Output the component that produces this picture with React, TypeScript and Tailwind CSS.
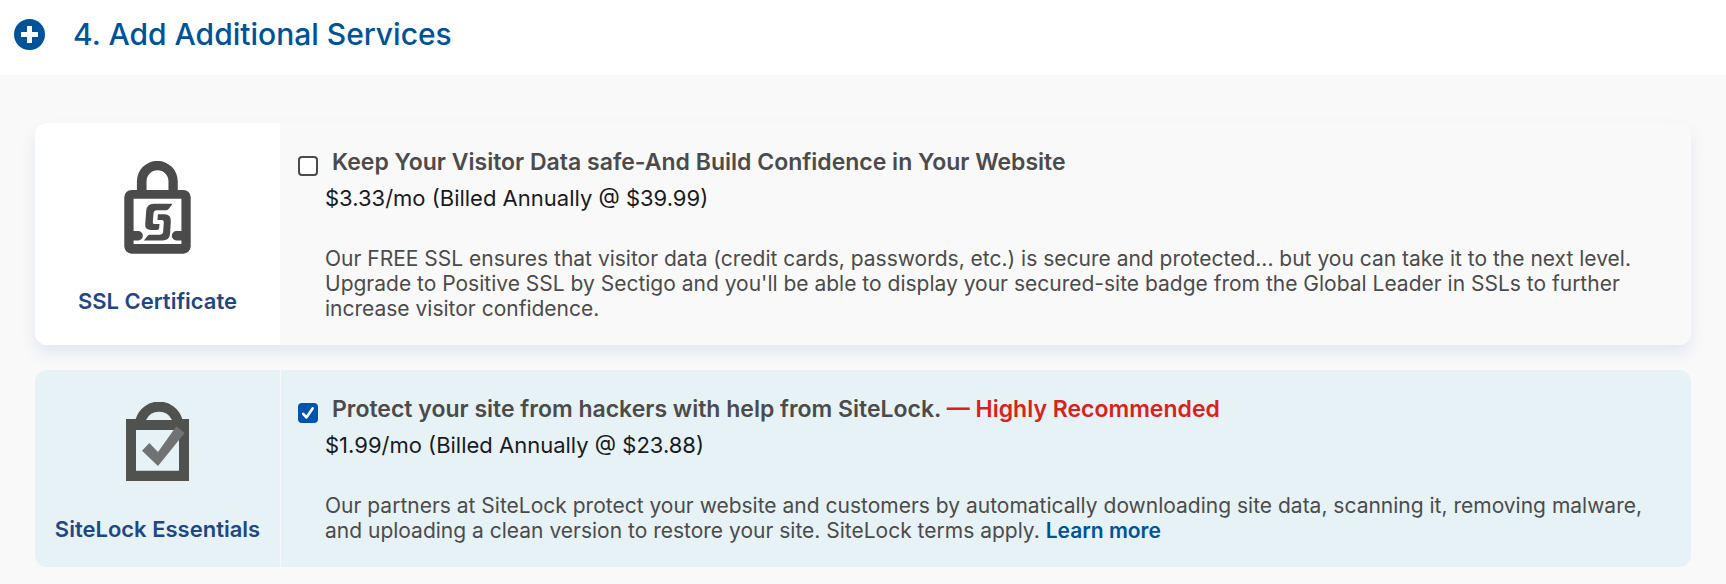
import React, { useId, useState } from 'react';

interface Service {
  name: string;
  icon: React.ReactNode;
  title: string;
  badge?: string;
  price: string;
  description: string;
  link?: string;
  selected: boolean;
}

const SslIcon: React.FC = () => (
  <svg viewBox="43 32 200 280" className="w-[67px] h-[93px]" fill="#4b4b4b" aria-hidden="true">
    <path d="M81 126V93a61.5 61.5 0 0 1 123 0v33h-28V93a33 33 0 0 0-66 0v33Z" />
    <path
      fillRule="evenodd"
      d="M65 119H221a22 22 0 0 1 22 22V289a22 22 0 0 1-22 22H65a22 22 0 0 1-22-22V141a22 22 0 0 1 22-22ZM71 146V282H215V146Z"
    />
    <path d="M60 243H85a14 14 0 0 1 0 28H60ZM226 243H200a14 14 0 0 0 0 28H226Z" />
    <path d="M186 161H132Q111 161 109 182L106 222Q105 240 123 240H142Q147 240 148 233L149 222H135Q128 222 129 214L131 190Q132 180 141 180H170Q174 180 177 176L187 163Z" />
    <path d="M144 192H164Q184 192 183 213L181 250Q179 271 158 271H102L114 256Q116 254 120 254H149Q159 254 160 244L162 217Q162 210 156 210H143Z" />
  </svg>
);

const SiteLockIcon: React.FC = () => (
  <svg viewBox="48 36 189 237" className="w-[63px] h-[79px]" aria-hidden="true">
    <path
      fill="#505250"
      fillRule="evenodd"
      d="M48 87H77A73 73 0 0 1 217 87H237V273H48ZM108 90H186A43 43 0 0 0 108 90ZM78 120V242H207V120Z"
    />
    <path fill="#717274" d="M96 182L118 159L144 186L199 109L224 129L144 228Z" />
  </svg>
);

const services: Service[] = [
  {
    name: 'SSL Certificate',
    icon: <SslIcon />,
    title: 'Keep Your Visitor Data safe-And Build Confidence in Your Website',
    price: '$3.33/mo (Billed Annually @ $39.99)',
    description:
      "Our FREE SSL ensures that visitor data (credit cards, passwords, etc.) is secure and protected... but you can take it to the next level. Upgrade to Positive SSL by Sectigo and you'll be able to display your secured-site badge from the Global Leader in SSLs to further increase visitor confidence.",
    selected: false,
  },
  {
    name: 'SiteLock Essentials',
    icon: <SiteLockIcon />,
    title: 'Protect your site from hackers with help from SiteLock.',
    badge: '— Highly Recommended',
    price: '$1.99/mo (Billed Annually @ $23.88)',
    description:
      'Our partners at SiteLock protect your website and customers by automatically downloading site data, scanning it, removing malware, and uploading a clean version to restore your site. SiteLock terms apply.',
    link: 'Learn more',
    selected: true,
  },
];

const ServiceCard: React.FC<{ service: Service }> = ({ service }) => {
  const [checked, setChecked] = useState(service.selected);
  const id = useId();

  return (
    <article
      className={`flex overflow-hidden rounded-xl ${
        checked ? '' : 'shadow-[0_8px_16px_rgba(0,84,166,0.1)]'
      }`}
    >
      <div
        className={`flex w-[245px] shrink-0 flex-col items-center justify-between ${
          checked ? 'bg-[#e6f2f6] pt-8 pb-[26px]' : 'bg-white pt-[38px] pb-8'
        }`}
      >
        {service.icon}
        <h3 className="text-[22px] leading-6 font-semibold text-[#1f4784]">{service.name}</h3>
      </div>

      <div
        className={`flex-1 pt-[25px] pb-6 pr-10 ${
          checked ? 'border-l border-[#f9f9f9] bg-[#e6f2f5]' : 'bg-[#f9f9f9] pl-px'
        }`}
      >
        <div className="flex items-center gap-3.5 pl-[17px]">
          <span className="relative top-1 grid size-5 shrink-0">
            <input
              id={id}
              type="checkbox"
              checked={checked}
              onChange={(e) => setChecked(e.target.checked)}
              className="size-5 appearance-none rounded border-2 border-[#4b4b4b] bg-white checked:border-[#0054b0] checked:bg-[#0054b0]"
            />
            {checked && (
              <svg viewBox="0 0 20 20" className="pointer-events-none absolute inset-0" fill="none" aria-hidden="true">
                <path d="M5.2 10.8L8.4 14.4L14.6 5.4" stroke="#fff" strokeWidth="2.6" strokeLinecap="round" strokeLinejoin="round" />
              </svg>
            )}
          </span>
          <label htmlFor={id} className="text-[23px] leading-7 font-semibold text-[#4b4b4b]">
            {service.title}
            {service.badge && <span className="text-[#d9221c]"> {service.badge}</span>}
          </label>
        </div>
        <p className="mt-2 pl-11 text-[22px] leading-7 text-[#1a1a1f]">{service.price}</p>
        <p className="mt-[34px] pl-11 text-[21px] leading-[25px] text-[#4b4b4b]">
          {service.description}
          {service.link && (
            <>
              {' '}
              <a href="#learn-more" className="font-semibold text-[#005299]">{service.link}</a>
            </>
          )}
        </p>
      </div>
    </article>
  );
};

const App: React.FC = () => {
  return (
    <section className="min-h-screen bg-[#f9f9f9] font-['Inter',sans-serif]">
      <header className="flex items-center gap-7 bg-white px-3.5 pt-4 pb-[23px]">
        <svg viewBox="0 0 31 31" className="size-[31px]" aria-hidden="true">
          <circle cx="15.5" cy="15.5" r="15.5" fill="#005299" />
          <path d="M15.5 7v17M7 15.5h17" stroke="#fff" strokeWidth="5" />
        </svg>
        <h2 className="text-[30px] leading-9 font-medium text-[#005299]">4. Add Additional Services</h2>
      </header>

      <div className="flex flex-col gap-[25px] px-[35px] pt-12 pb-4">
        {services.map((service) => (
          <ServiceCard key={service.name} service={service} />
        ))}
      </div>
    </section>
  );
};

export default App;
